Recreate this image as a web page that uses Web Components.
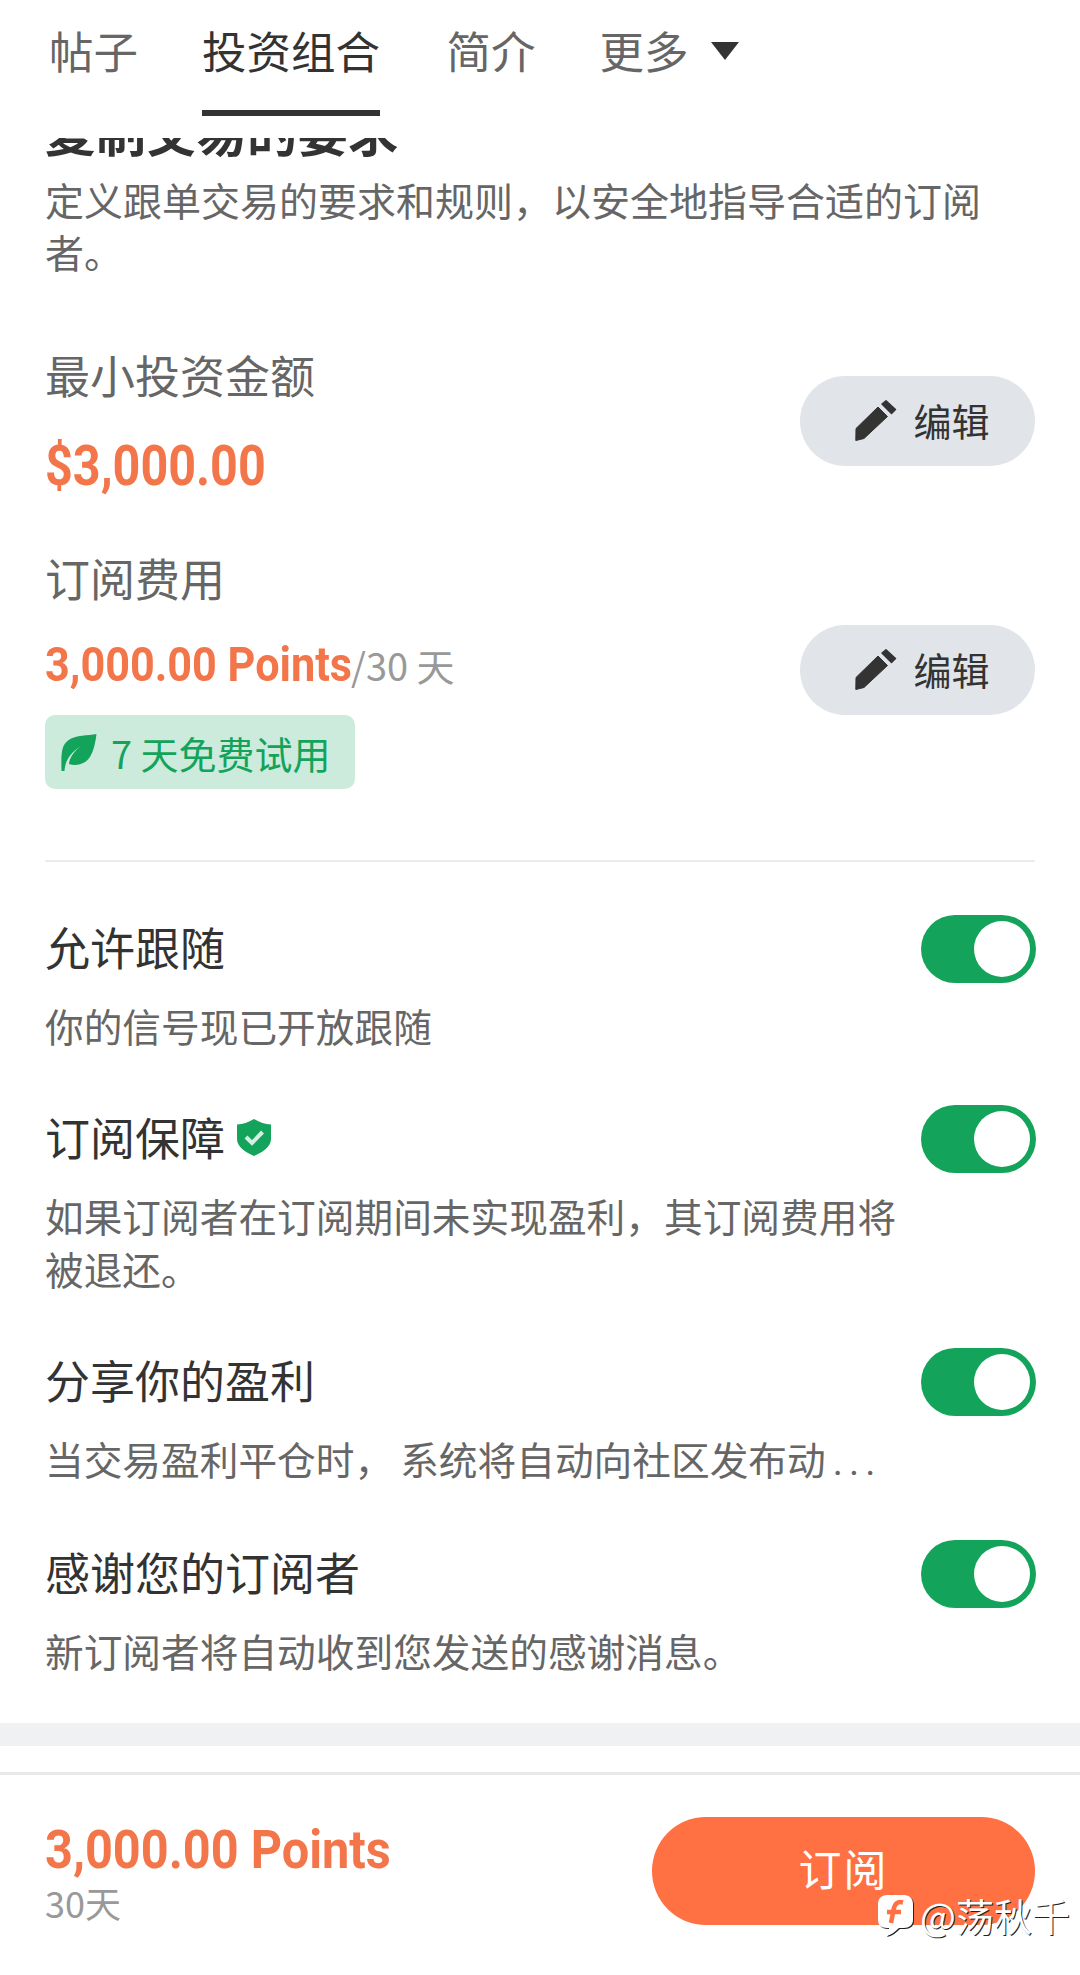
<!DOCTYPE html>
<html lang="zh">
<head>
<meta charset="utf-8">
<title>投资组合</title>
<style>
	html, body { margin: 0; height: 1975px; background: #fff; overflow: hidden; }
	body { font-family: "Noto Sans CJK SC", "Noto Sans", sans-serif; color: #333; }
</style>
</head>
<body>
<app-page>
	<tab-bar slot="header">
		<tab-item>帖子</tab-item>
		<tab-item active>投资组合</tab-item>
		<tab-item style="margin-left:2.500px">简介</tab-item>
		<tab-item caret>更多</tab-item>
	</tab-bar>

	<intro-block>
		<span slot="title">复制交易的要求</span>
		定义跟单交易的要求和规则，以安全地指导合适的订阅者。
	</intro-block>

	<price-row style="margin-top:68px">
		<span slot="label">最小投资金额</span>
		<price-text size="large">$3,000.00</price-text>
	</price-row>

	<price-row second style="margin-top:47px">
		<span slot="label">订阅费用</span>
		<price-text>3,000.00 Points</price-text><span slot="unit">/30 天</span>
		<trial-badge slot="extra">7 天免费试用</trial-badge>
	</price-row>

	<section-rule></section-rule>

	<switch-row style="margin-top:55px">
		<span slot="title">允许跟随</span>
		你的信号现已开放跟随
	</switch-row>
	<switch-row shield>
		<span slot="title">订阅保障</span>
		如果订阅者在订阅期间未实现盈利，其订阅费用将被退还。
	</switch-row>
	<switch-row>
		<span slot="title">分享你的盈利</span>
		当交易盈利平仓时<span style="letter-spacing:7px">，</span>系统将自动向社区发布动<span style="font-family:Roboto;letter-spacing:6px;line-height:0;margin-left:7px">...</span>
	</switch-row>
	<switch-row style="margin-top:57px">
		<span slot="title">感谢您的订阅者</span>
		新订阅者将自动收到您发送的感谢消息。
	</switch-row>

	<footer-bar slot="footer">
		<price-text slot="price" size="footer">3,000.00 Points</price-text>
		<span slot="period">30天</span>
		<span slot="action">订阅</span>
	</footer-bar>
</app-page>
<water-mark>@荡秋千</water-mark>

<script>
(function() {
	const FONT = `"Noto Sans CJK SC", "Noto Sans", sans-serif`;

	function define(name, css, html) {
		const template = document.createElement("template");
		template.innerHTML = `<style>${css}</style>${html}`;
		customElements.define(name, class extends HTMLElement {
			constructor() {
				super();
				this.attachShadow({mode: "open"}).appendChild(template.content.cloneNode(true));
			}
		});
	}

	define("app-page", `
		:host { display: flex; flex-direction: column; height: 1975px; font-family: ${FONT}; background: #fff; }
		.scroll { flex: 1; min-height: 0; overflow: hidden; }
		.inner { margin-top: -38px; padding: 0 45px; }
	`, `
		<slot name="header"></slot>
		<div class="scroll"><div class="inner"><slot></slot></div></div>
		<slot name="footer"></slot>
	`);

	define("tab-bar", `
		:host { display: flex; gap: 64px; height: 116px; padding: 0 0 22px 49px; background: #fff; flex: none; position: relative; z-index: 1; }
	`, `<slot></slot>`);

	define("tab-item", `
		:host { display: flex; align-items: flex-start; padding-top: 20px; height: 90px; font-size: 44.500px; line-height: 60px; color: #666; border-bottom: 6px solid transparent; }
		:host([active]) { color: #333; border-bottom-color: #333; }
		svg { display: none; margin: 22px 0 0 21px; }
		:host([caret]) svg { display: block; }
	`, `
		<slot></slot>
		<svg width="30" height="18" viewBox="0 0 30 18"><path d="M1 0H29L15 18Z" fill="#333"/></svg>
	`);

	define("intro-block", `
		:host { display: block; }
		.title { font-size: 50.500px; line-height: 60px; font-weight: 700; color: #333; }
		.text { margin-top: 13px; width: 950px; font-size: 39px; line-height: 52px; color: #666; }
	`, `
		<div class="title"><slot name="title"></slot></div>
		<div class="text"><slot></slot></div>
	`);

	// the reference uses a DIN style face, so Roboto is squeezed to its width
	define("price-text", `
		:host { display: inline-block; width: 306px; white-space: nowrap; font-family: Roboto, sans-serif; font-weight: 700; color: #f3754a; font-size: 48px; }
		span { display: inline-block; transform-origin: left; transform: scaleX(.9); }
		:host([size="large"]) { width: 220px; font-size: 56px; }
		:host([size="large"]) span { transform: scaleX(.866); }
		:host([size="footer"]) { width: 344px; font-size: 53px; }
		:host([size="footer"]) span { transform: scaleX(.918); }
	`, `<span><slot></slot></span>`);

	define("edit-button", `
		:host { display: flex; align-items: center; justify-content: center; gap: 16px; box-sizing: border-box; width: 235px; height: 90px; padding: 0 0 0 10px; border-radius: 45px; background: #e1e4e8; color: #333; font-size: 38px; flex: none; }
		svg { display: block; }
		span { display: block; margin-bottom: 3px; }
	`, `
		<svg width="42" height="42" viewBox="0 0 42 42" fill="#333" stroke="#333" stroke-linejoin="round">
			<path d="M1 28.500L23 7L32.500 16.500L9 38.500L0.800 40.500Z"/>
			<path d="M27 4L31 0.800L40.500 9.500L36.500 13.500Z" stroke-width="1.500"/>
		</svg>
		<span><slot></slot></span>
	`);

	define("price-row", `
		:host { display: flex; align-items: center; justify-content: space-between; }
		.label { font-size: 45px; line-height: 60px; color: #666; }
		.value { margin-top: 26px; display: flex; align-items: baseline; height: 70px; line-height: 70px; }
		:host([second]) .value { margin-top: 29px; height: 56px; line-height: 56px; }
		.unit { font-size: 38px; color: #999; }
		::slotted(trial-badge) { margin-top: 22px; }
		.side { align-self: flex-start; margin-top: 31px; }
		:host([second]) .side { margin-top: 77px; }
	`, `
		<div>
			<div class="label"><slot name="label"></slot></div>
			<div class="value"><slot></slot><span class="unit"><slot name="unit"></slot></span></div>
			<slot name="extra"></slot>
		</div>
		<div class="side"><edit-button>编辑</edit-button></div>
	`);

	define("trial-badge", `
		:host { display: flex; width: max-content; align-items: center; gap: 14px; height: 74px; padding: 0 24px 0 16px; border-radius: 10px; background: #cdebdd; color: #14a35a; font-size: 38px; }
		svg { display: block; }
	`, `
		<svg width="36" height="37" viewBox="0 0 36 37">
			<path d="M35.500 0C27 2 15 0.500 7 6.500C0.500 11.500 0 19 0.500 37H3.500C4 29 7 20 20 12C11 19 8.500 25 8 30C14 32 24 31.500 29.500 22C33 16 34.500 8 35.500 0Z" fill="#14a35a"/>
		</svg>
		<slot></slot>
	`);

	define("section-rule", `
		:host { display: block; height: 2px; margin-top: 71px; background: #ececec; }
	`, ``);

	define("toggle-switch", `
		:host { display: block; width: 115px; height: 68px; border-radius: 34px; background: #14a35a; position: relative; flex: none; }
		.knob { position: absolute; top: 6px; right: 6px; width: 56px; height: 56px; border-radius: 50%; background: #fff; }
	`, `<div class="knob"></div>`);

	define("switch-row", `
		:host { display: grid; grid-template-columns: 870px 1fr; margin-top: 55px; }
		.title { display: flex; align-items: center; gap: 12px; height: 60px; font-size: 45px; line-height: 60px; color: #333; }
		.text { margin-top: 18px; font-size: 38.700px; line-height: 53px; color: #666; }
		toggle-switch { justify-self: end; margin: -2px -1px -2px 0; }
		svg { display: none; }
		:host([shield]) svg { display: block; }
	`, `
		<div class="title"><slot name="title"></slot>
			<svg width="34" height="37" viewBox="0 0 34 37">
				<path d="M17 0C23 3.500 28 5 34 5.500V20C34 28 25 33.500 17 37C9 33.500 0 28 0 20V5.500C6 5 11 3.500 17 0Z" fill="#14a35a"/>
				<path d="M9 18L15 24L25.500 13" fill="none" stroke="#d5f0e2" stroke-width="4"/>
			</svg>
		</div>
		<toggle-switch></toggle-switch>
		<div class="text"><slot></slot></div>
	`);

	define("footer-bar", `
		:host { display: block; flex: none; height: 252px; background: #fff; }
		.band { height: 23px; background: #eff1f2; }
		.main { display: flex; justify-content: space-between; align-items: flex-start; margin-top: 26px; border-top: 3px solid #e9e9e9; padding: 42px 45px 0; }
		.price { height: 66px; line-height: 66px; }
		.period { font-size: 36px; line-height: 48px; color: #999; margin-top: -5px; }
		.action { display: flex; align-items: center; justify-content: center; width: 383px; height: 108px; padding-bottom: 8px; box-sizing: border-box; border-radius: 54px; background: #ff7043; color: #fff; font-size: 43px; letter-spacing: 2px; }
	`, `
		<div class="band"></div>
		<div class="main">
			<div>
				<div class="price"><slot name="price"></slot></div>
				<div class="period"><slot name="period"></slot></div>
			</div>
			<div class="action"><slot name="action"></slot></div>
		</div>
	`);

	define("water-mark", `
		:host { position: absolute; left: 877px; top: 1893px; display: flex; align-items: center; gap: 6px; color: #fff; font-family: ${FONT}; font-size: 38px; line-height: 44px; text-shadow: 1px 1px 0 #222; }
		svg { display: block; filter: drop-shadow(1px 1px 0 #222); }
	`, `
		<svg width="37" height="42" viewBox="0 0 37 42">
			<path d="M10 1H27C32.500 1 36 4.500 36 10V26C36 31 32 34 27 34H22C18 38 14 41 9 42C11 39 12 37 12 34H10C4.500 34 1 31 1 26V10C1 4.500 4.500 1 10 1Z" fill="#fff"/>
			<path d="M26 8.500C20 7 17.500 10 16.500 16L14 29M10 18H24" fill="none" stroke="#ff7043" stroke-width="4.500"/>
		</svg>
		<slot></slot>
	`);
})();
</script>
</body>
</html>
